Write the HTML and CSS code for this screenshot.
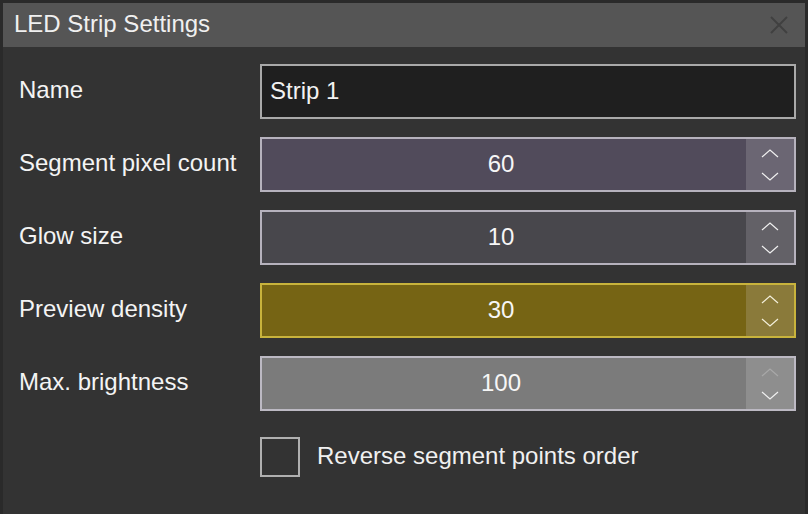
FILE: index.html
```html
<!DOCTYPE html>
<html>
<head>
<meta charset="utf-8">
<link rel="stylesheet" href="styles.css">
</head>
<body>
<div class="dialog">
  <div class="titlebar">
    <span class="title">LED Strip Settings</span>
    <svg class="close" width="20" height="20" viewBox="0 0 20 20"><path d="M2 2 L18 18 M18 2 L2 18" stroke="#404040" stroke-width="2" fill="none"/></svg>
  </div>
  <div class="body">
    <div class="row">
      <div class="label">Name</div>
      <div class="field text-field"><span class="txt">Strip 1</span></div>
    </div>
    <div class="row">
      <div class="label">Segment pixel count</div>
      <div class="field num purple">
        <div class="value"><span class="txt">60</span></div>
        <div class="spin">
          <svg width="18" height="9" viewBox="0 0 18 9"><path d="M1 8 L9 1 L17 8" stroke="#f0f0f0" stroke-width="1.2" fill="none"/></svg>
          <svg width="18" height="9" viewBox="0 0 18 9"><path d="M1 1 L9 8 L17 1" stroke="#f0f0f0" stroke-width="1.2" fill="none"/></svg>
        </div>
      </div>
    </div>
    <div class="row">
      <div class="label">Glow size</div>
      <div class="field num grey">
        <div class="value"><span class="txt">10</span></div>
        <div class="spin">
          <svg width="18" height="9" viewBox="0 0 18 9"><path d="M1 8 L9 1 L17 8" stroke="#f0f0f0" stroke-width="1.2" fill="none"/></svg>
          <svg width="18" height="9" viewBox="0 0 18 9"><path d="M1 1 L9 8 L17 1" stroke="#f0f0f0" stroke-width="1.2" fill="none"/></svg>
        </div>
      </div>
    </div>
    <div class="row">
      <div class="label">Preview density</div>
      <div class="field num gold">
        <div class="value"><span class="txt">30</span></div>
        <div class="spin">
          <svg width="18" height="9" viewBox="0 0 18 9"><path d="M1 8 L9 1 L17 8" stroke="#f4f0dc" stroke-width="1.2" fill="none"/></svg>
          <svg width="18" height="9" viewBox="0 0 18 9"><path d="M1 1 L9 8 L17 1" stroke="#f4f0dc" stroke-width="1.2" fill="none"/></svg>
        </div>
      </div>
    </div>
    <div class="row">
      <div class="label">Max. brightness</div>
      <div class="field num light">
        <div class="value"><span class="txt">100</span></div>
        <div class="spin">
          <svg width="18" height="9" viewBox="0 0 18 9"><path d="M1 8 L9 1 L17 8" stroke="#a8a8a8" stroke-width="1.2" fill="none"/></svg>
          <svg width="18" height="9" viewBox="0 0 18 9"><path d="M1 1 L9 8 L17 1" stroke="#f0f0f0" stroke-width="1.2" fill="none"/></svg>
        </div>
      </div>
    </div>
    <div class="check-row">
      <div class="checkbox"></div>
      <div class="check-label">Reverse segment points order</div>
    </div>
  </div>
</div>
</body>
</html>
```
FILE: styles.css
```css
html, body {
  margin: 0;
  padding: 0;
  background: #2a2a2a;
  height: 514px;
  overflow: hidden;
}
body {
  font-family: "Liberation Sans", Arial, sans-serif;
  color: #f2f2f2;
  padding: 3px 3px 0 3px;
  box-sizing: border-box;
}
.dialog {
  background: #333333;
  height: 511px;
  display: flex;
  flex-direction: column;
}
.titlebar {
  height: 44px;
  background: #555555;
  display: flex;
  align-items: center;
  justify-content: space-between;
  padding: 0 16px 0 11px;
}
.title {
  font-size: 24px;
  color: #f0f0f0;
  margin-top: -2px;
}
.close {
  display: block;
}
.body {
  padding: 17px 9px 0 16px;
  display: flex;
  flex-direction: column;
  gap: 18px;
}
.row {
  display: flex;
  align-items: center;
  height: 55px;
}
.label {
  width: 241px;
  font-size: 24px;
  color: #f4f4f4;
  margin-top: -3px;
}
.field {
  flex: 1;
  height: 55px;
  box-sizing: border-box;
  border: 2px solid #b5b2ba;
  font-size: 24px;
}
.txt {
  margin-top: -2px;
}
.text-field {
  background: #1f1f1f;
  border-color: #a9a9a9;
  display: flex;
  align-items: center;
  padding-left: 8px;
}
.num {
  display: flex;
}
.value {
  flex: 1;
  display: flex;
  align-items: center;
  justify-content: center;
  padding-right: 6px;
  color: #f6f6f6;
}
.spin {
  width: 48px;
  display: flex;
  flex-direction: column;
  align-items: center;
  justify-content: center;
  gap: 14px;
}
.spin svg { display: block; }
.purple { background: #514b5b; border-color: #b6b2bd; }
.purple .spin { background: #6b6673; }
.grey { background: #48474c; border-color: #b6b2bd; }
.grey .spin { background: #636167; }
.gold { background: #766414; border-color: #c8b33c; }
.gold .spin { background: #8a7a3a; }
.light { background: #7b7b7b; border-color: #bcb9c3; }
.light .spin { background: #8e8e8e; }
.check-row {
  display: flex;
  align-items: center;
  margin-top: 8px;
  padding-left: 241px;
}
.checkbox {
  width: 40px;
  height: 40px;
  box-sizing: border-box;
  border: 2px solid #b0b0b0;
}
.check-label {
  font-size: 24px;
  margin-left: 17px;
  margin-top: -3px;
  color: #f0f0f0;
}
```
